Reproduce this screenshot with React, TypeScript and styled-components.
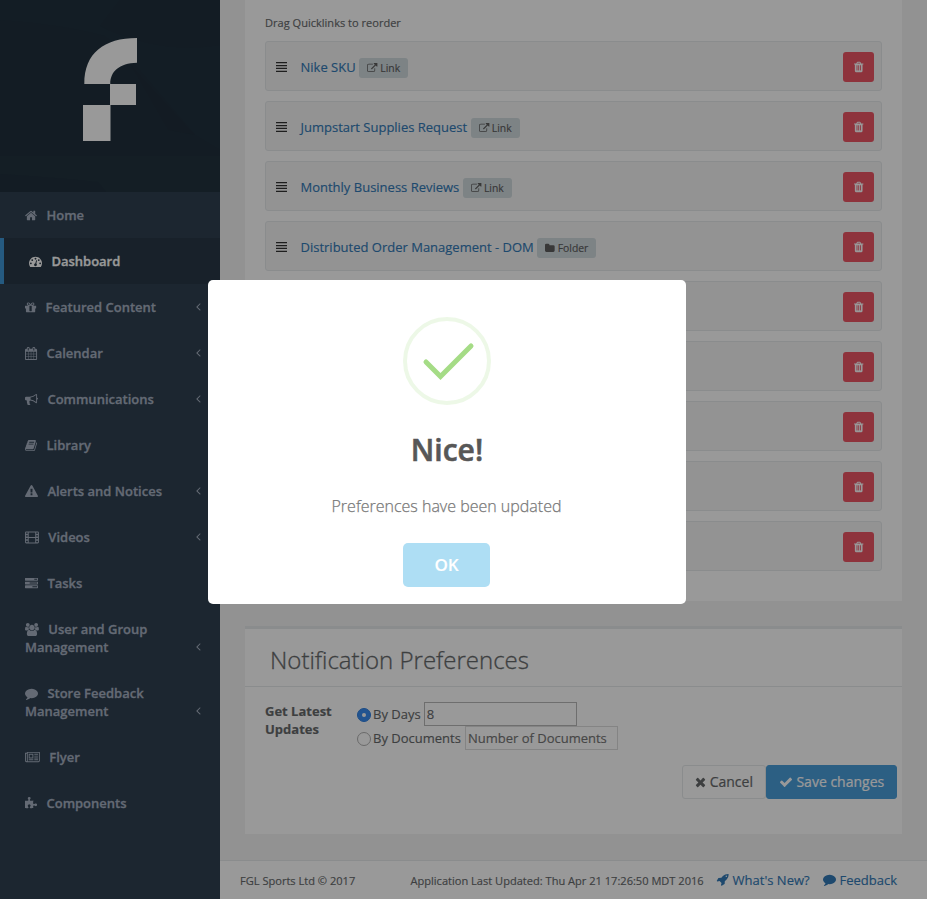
import React from "react";
import styled, { createGlobalStyle } from "styled-components";

const GlobalStyle = createGlobalStyle`
  * { box-sizing: border-box; }
  html, body { margin: 0; padding: 0; }
  body {
    font-family: "Open Sans", "Noto Sans", sans-serif;
    font-size: 13px;
    line-height: 18px;
    color: #676a6c;
    background: #f3f3f4;
    overflow: hidden;
    -webkit-text-stroke: 0.15px currentColor;
  }
`;

/* ---------- icons: [left edge, advance width, path] on a 1792-unit em ---------- */

type Glyph = [number, number, string];

const filmHoles = [128, 1536]
  .flatMap((x) => [256, 640, 1024, 1408].map((y) => `M${x} ${y - 64}h256v192h-256z`))
  .join("");

const glyphs: Record<string, Glyph> = {
  home: [64, 1664, "M1472 992v480q0 26-19 45t-45 19h-384v-384h-256v384h-384q-26 0-45-19t-19-45v-480q0-1 .5-3t.5-3l575-474 575 474q1 2 1 6zm223-69l-62 74q-8 9-21 11h-3q-13 0-21-7l-692-577-692 577q-12 8-24 7-13-2-21-11l-62-74q-8-10-7-23.500t11-21.500l719-599q32-26 76-26t76 26l244 204v-195q0-14 9-23t23-9h192q14 0 23 9t9 23v408l219 182q10 8 11 21.500t-7 23.500z"],
  dashboard: [0, 1792, "M384 1152q0-53-37.500-90.500t-90.500-37.500-90.500 37.500-37.500 90.500 37.500 90.500 90.500 37.500 90.500-37.500 37.500-90.500zm192-448q0-53-37.500-90.500t-90.500-37.500-90.500 37.500-37.500 90.500 37.500 90.500 90.500 37.500 90.500-37.500 37.500-90.500zm428 481l101-382q6-26-7.500-48.500t-38.500-29.500-48 6.500-30 39.500l-101 382q-60 5-107 43.500t-63 98.500q-20 77 20 146t117 89 146-20 89-117q16-60-6-117t-72-91zm660-33q0-53-37.500-90.500t-90.500-37.500-90.500 37.500-37.500 90.500 37.500 90.500 90.500 37.500 90.500-37.500 37.500-90.500zm-640-640q0-53-37.500-90.500t-90.500-37.500-90.500 37.500-37.500 90.500 37.500 90.500 90.500 37.500 90.500-37.500 37.500-90.500zm448 192q0-53-37.500-90.500t-90.500-37.500-90.500 37.500-37.500 90.500 37.500 90.500 90.500 37.500 90.500-37.500 37.500-90.500zm320 448q0 261-141 483-19 29-54 29h-1402q-35 0-54-29-141-221-141-483 0-182 71-348t191-286 286-191 348-71 348 71 286 191 191 286 71 348z"],
  gift: [128, 1536, "M1056 1356v-716h-320v716q0 25 18 38.500t46 13.500h192q28 0 46-13.500t18-38.500zm-456-844h195l-126-161q-26-31-69-31-40 0-68 28t-28 68 28 68 68 28zm688-96q0-40-28-68t-68-28q-43 0-69 31l-125 161h194q40 0 68-28t28-68zm376 256v320q0 14-9 23t-23 9h-96v416q0 40-28 68t-68 28h-1088q-40 0-68-28t-28-68v-416h-96q-14 0-23-9t-9-23v-320q0-14 9-23t23-9h440q-93 0-158.500-65.500t-65.500-158.500 65.500-158.500 158.500-65.500q107 0 168 77l128 165 128-165q61-77 168-77 93 0 158.500 65.500t65.500 158.500-65.500 158.500-158.500 65.500h440q14 0 23 9t9 23z"],
  calendar: [64, 1664, "M192 1664h288v-288h-288v288zm352 0h320v-288h-320v288zm-352-352h288v-320h-288v320zm352 0h320v-320h-320v320zm-352-384h288v-288h-288v288zm736 736h320v-288h-320v288zm-384-736h320v-288h-320v288zm768 736h288v-288h-288v288zm-384-352h320v-320h-320v320zm-352-864v-288q0-13-9.500-22.500t-22.500-9.500h-64q-13 0-22.500 9.500t-9.500 22.500v288q0 13 9.500 22.500t22.500 9.500h64q13 0 22.500-9.500t9.500-22.500zm736 864h288v-320h-288v320zm-384-384h320v-288h-320v288zm384 0h288v-288h-288v288zm32-480v-288q0-13-9.500-22.500t-22.500-9.500h-64q-13 0-22.500 9.500t-9.500 22.500v288q0 13 9.500 22.500t22.500 9.500h64q13 0 22.500-9.500t9.500-22.500zm384-64v1280q0 52-38 90t-90 38h-1408q-52 0-90-38t-38-90v-1280q0-52 38-90t90-38h128v-96q0-66 47-113t113-47h64q66 0 113 47t47 113v96h384v-96q0-66 47-113t113-47h64q66 0 113 47t47 113v96h128q52 0 90 38t38 90z"],
  bullhorn: [0, 1792, "M1664 640q53 0 90.500 37.500t37.500 90.500-37.500 90.500-90.500 37.500v384q0 52-38 90t-90 38q-417-347-812-380-58 19-91 66t-31 100.500 40 92.500q-20 33-23 65.500t6 58 33.500 55 48 50 61.500 50.500q-29 58-111.500 83t-168.500 11.500-132-55.500q-7-23-29.500-87.500t-32-94.500-23-89-15-101 3.500-98.500 22-110.500h-122q-66 0-113-47t-47-113v-192q0-66 47-113t113-47h480q435 0 896-384 52 0 90 38t38 90v384zm-128 604v-954q-394 302-768 343v270q377 42 768 341z"],
  book: [64, 1664, "M1703 478q40 57 18 129l-275 906q-19 64-76.500 107.500t-122.500 43.500h-923q-77 0-148.500-53.500t-99.500-131.500q-24-67-2-127 0-4 3-27t4-37q1-8-3-21.500t-3-19.500q2-11 8-21t16.500-23.500 16.500-23.500q23-38 45-91.500t30-91.500q3-10 .5-30t-.5-28q3-11 17-28t17-23q21-36 42-92t25-90q1-9-2.500-32t.5-28q4-13 22-30.500t22-22.500q19-26 42.500-84.500t27.500-96.500q1-8-3-25.500t-2-26.500q2-8 9-18t18-23 17-21q8-12 16.500-30.500t15-35 16-36 19.500-32 26.500-23.500 36-11.500 47.500 5.500l-1 3q38-9 51-9h761q74 0 114 56t18 130l-274 906q-36 119-71.500 153.500t-128.500 34.500h-869q-27 0-38 15-11 16-1 43 24 70 144 70h923q29 0 56-15.500t35-41.500l300-987q7-22 5-57 38 15 59 43zm-1064 2q-4 13 2 22.500t20 9.500h608q13 0 25.500-9.500t16.500-22.500l21-64q4-13-2-22.500t-20-9.500h-608q-13 0-25.500 9.500t-16.500 22.500zm-83 256q-4 13 2 22.500t20 9.500h608q13 0 25.500-9.500t16.500-22.500l21-64q4-13-2-22.500t-20-9.500h-608q-13 0-25.500 9.500t-16.500 22.500z"],
  warning: [0, 1792, "M1024 1375v-190q0-14-9.500-23.500t-22.500-9.500h-192q-13 0-22.500 9.500t-9.500 23.500v190q0 14 9.500 23.500t22.500 9.500h192q13 0 22.500-9.500t9.500-23.500zm-2-374l18-459q0-12-10-19-13-11-24-11h-220q-11 0-24 11-10 7-10 21l17 457q0 10 10 16.500t24 6.500h185q14 0 23.500-6.500t10.500-16.500zm-14-934l768 1408q35 63-2 126-17 29-46.500 46t-63.500 17h-1536q-34 0-63.500-17t-46.500-46q-37-63-2-126l768-1408q17-31 47-49t65-18 65 18 47 49z"],
  film: [0, 1920, `M160 64h1600q160 0 160 160v1344q0 160-160 160h-1600q-160 0-160-160v-1344q0-160 160-160z${filmHoles}M512 192h896v640h-896zM512 960h896v640h-896z`],
  tasks: [0, 1792, "M1024 1408h640v-128h-640v128zm-384-512h1024v-128h-1024v128zm640-512h384v-128h-384v128zm512 832v256q0 26-19 45t-45 19h-1664q-26 0-45-19t-19-45v-256q0-26 19-45t45-19h1664q26 0 45 19t19 45zm0-512v256q0 26-19 45t-45 19h-1664q-26 0-45-19t-19-45v-256q0-26 19-45t45-19h1664q26 0 45 19t19 45zm0-512v256q0 26-19 45t-45 19h-1664q-26 0-45-19t-19-45v-256q0-26 19-45t45-19h1664q26 0 45 19t19 45z"],
  users: [-64, 1920, "M529 896q-162 5-265 128h-134q-82 0-138-40.500t-56-118.500q0-353 124-353 6 0 43.500 21t97.500 42.500 119 21.500q67 0 133-23-5 37-5 66 0 139 81 256zm1071 637q0 120-73 189.500t-194 69.500h-874q-121 0-194-69.500t-73-189.500q0-53 3.500-103.500t14-109 26.500-108.500 43-97.500 62-81 85.500-53.500 111.500-20q10 0 43 21.500t73 48 107 48 135 21.500 135-21.500 107-48 73-48 43-21.500q61 0 111.500 20t85.500 53.500 62 81 43 97.500 26.500 108.500 14 109 3.500 103.500zm-1024-1277q0 106-75 181t-181 75-181-75-75-181 75-181 181-75 181 75 75 181zm704 384q0 159-112.500 271.500t-271.500 112.500-271.500-112.500-112.500-271.500 112.500-271.500 271.500-112.500 271.500 112.500 112.500 271.500zm576 225q0 78-56 118.500t-138 40.500h-134q-103-123-265-128 81-117 81-256 0-29-5-66 66 23 133 23 59 0 119-21.500t97.500-42.500 43.500-21q124 0 124 353zm-128-609q0 106-75 181t-181 75-181-75-75-181 75-181 181-75 181 75 75 181z"],
  comment: [0, 1792, "M1792 896q0 174-120 321.500t-326 233-450 85.500q-70 0-145-8-198 175-460 242-49 14-114 22-17 2-30.500-9t-17.500-29v-1q-3-4-.5-12t2-10 4.500-9.500l6-9 7-8.500 8-9q7-8 31-34.500t34.500-38 31-39.500 32.500-51 27-59 26-76q-157-89-247.500-220t-90.500-281q0-130 71-248.500t191-204.500 286-136.500 348-50.500q244 0 450 85.500t326 233 120 321.500z"],
  newspaper: [0, 2048, "M1024 512h-384v384h384v-384zm128 640v128h-640v-128h640zm0-768v640h-640v-640h640zm640 768v128h-512v-128h512zm0-256v128h-512v-128h512zm0-256v128h-512v-128h512zm0-256v128h-512v-128h512zm-1536 960v-960h-128v960q0 26 19 45t45 19 45-19 19-45zm1664 0v-1088h-1536v1088q0 33-11 64h1483q26 0 45-19t19-45zm128-1216v1216q0 80-56 136t-136 56h-1664q-80 0-136-56t-56-136v-1088h256v-128h1792z"],
  puzzle: [91, 1664, "M1755 1083q0 81-44.500 135t-123.500 54q-41 0-77.500-17.500t-59-38-56.500-38-71-17.500q-110 0-110 124 0 39 16 115t15 115v5q-22 0-33 1-34 3-97.500 11.500t-115.500 13.500-98 5q-61 0-103-26.500t-42-83.500q0-37 17.500-71t38-56.500 38-59 17.500-77.500q0-79-54-123.500t-135-44.500q-84 0-143 45.500t-59 127.500q0 43 15 83t33.500 64.500 33.500 53 15 50.500q0 45-46 89-37 35-117 35-95 0-245-24-9-2-27.500-4t-27.500-4l-13-2q-1 0-3-1-2 0-2-1v-1024q2 1 17.500 3.500t34 5 21.500 3.500q150 24 245 24 80 0 117-35 46-44 46-89 0-22-15-50.500t-33.500-53-33.500-64.500-15-83q0-82 59-127.500t144-45.500q80 0 134 44.500t54 123.500q0 41-17.500 77.500t-38 59-38 56.500-17.500 71q0 57 42 83.500t103 26.500q64 0 180-15t163-17v2q-1 2-3.500 17.500t-5 34-3.500 21.500q-24 150-24 245 0 80 35 117 44 46 89 46 22 0 50.500-15t53-33.500 64.500-33.500 83-15q82 0 127.500 59t45.500 143z"],
  angleLeft: [576, 640, "M1203 544q0 13-10 23l-393 393 393 393q10 10 10 23t-10 23l-50 50q-10 10-23 10t-23-10l-466-466q-10-10-10-23t10-23l466-466q10-10 23-10t23 10l50 50q10 10 10 23z"],
  trash: [192, 1408, "M704 1376v-704q0-14-9-23t-23-9h-64q-14 0-23 9t-9 23v704q0 14 9 23t23 9h64q14 0 23-9t9-23zm256 0v-704q0-14-9-23t-23-9h-64q-14 0-23 9t-9 23v704q0 14 9 23t23 9h64q14 0 23-9t9-23zm256 0v-704q0-14-9-23t-23-9h-64q-14 0-23 9t-9 23v704q0 14 9 23t23 9h64q14 0 23-9t9-23zm-544-992h448l-48-117q-7-9-17-11h-317q-10 2-17 11zm928 32v64q0 14-9 23t-23 9h-96v948q0 83-47 143.500t-113 60.500h-832q-66 0-113-58.500t-47-141.500v-952h-96q-14 0-23-9t-9-23v-64q0-14 9-23t23-9h309l70-167q15-37 54-63t79-26h320q40 0 79 26t54 63l70 167h309q14 0 23 9t9 23z"],
  external: [0, 1792, "M1408 928v320q0 119-84.500 203.500t-203.500 84.500h-832q-119 0-203.500-84.500t-84.500-203.500v-832q0-119 84.500-203.500t203.500-84.500h704q14 0 23 9t9 23v64q0 14-9 23t-23 9h-704q-66 0-113 47t-47 113v832q0 66 47 113t113 47h832q66 0 113-47t47-113v-320q0-14 9-23t23-9h64q14 0 23 9t9 23zm384-864v512q0 26-19 45t-45 19-45-19l-176-176-652 652q-10 10-23 10t-23-10l-114-114q-10-10-10-23t10-23l652-652-176-176q-19-19-19-45t19-45 45-19h512q26 0 45 19t19 45z"],
  folder: [64, 1664, "M1728 608v704q0 92-66 158t-158 66h-1216q-92 0-158-66t-66-158v-960q0-92 66-158t158-66h320q92 0 158 66t66 158v32h672q92 0 158 66t66 158z"],
  check: [0, 1792, "M1671 566q0 40-28 68l-724 724-136 136q-28 28-68 28t-68-28l-136-136-362-362q-28-28-28-68t28-68l136-136q28-28 68-28t68 28l294 295 656-657q28-28 68-28t68 28l136 136q28 28 28 68z"],
  times: [192, 1408, "M1490 1322q0 40-28 68l-136 136q-28 28-68 28t-68-28l-294-294-294 294q-28 28-68 28t-68-28l-136-136q-28-28-28-68t28-68l294-294-294-294q-28-28-28-68t28-68l136-136q28-28 68-28t68 28l294 294 294-294q28-28 68-28t68 28l136 136q28 28 28 68t-28 68l-294 294 294 294q28 28 28 68z"],
  rocket: [64, 1664, "M1440 448q0-40-28-68t-68-28-68 28-28 68 28 68 68 28 68-28 28-68zm224-288q0 249-75.500 430.500t-253.500 360.500q-81 80-195 176l-20 379q-2 16-16 26l-384 224q-7 4-16 4-12 0-23-9l-64-64q-13-14-8-32l85-276-281-281-276 85q-3 1-9 1-14 0-23-9l-64-64q-17-19-5-39l224-384q10-14 26-16l379-20q96-114 176-195 188-187 358-258t431-71q14 0 24 9.500t10 22.500z"],
};

const Svg = styled.svg<{ $ratio: number }>`
  width: ${(p) => p.$ratio}em;
  height: 1em;
  vertical-align: -0.143em;
  fill: currentColor;
  flex: none;
  overflow: visible;
`;

function Icon({ name, className }: { name: string; className?: string }) {
  const [x, w, d] = glyphs[name];
  return (
    <Svg className={className} $ratio={w / 1792} viewBox={`${x} 0 ${w} 1792`} aria-hidden>
      <path d={d} fillRule={name === "film" ? "evenodd" : "nonzero"} />
    </Svg>
  );
}

/* ---------- layout ---------- */

const Page = styled.div`
  display: flex;
  width: 927px;
  height: 899px;
`;

const Sidebar = styled.nav`
  width: 220px;
  flex: none;
  background: #2f4050;
`;

const Brand = styled.div`
  height: 192px;
  background: #21313e;
`;

const NavItem = styled.a<{ $active?: boolean }>`
  display: flex;
  align-items: flex-end;
  justify-content: space-between;
  padding: 14px 19.500px 14px 25px;
  border-left: ${(p) => (p.$active ? "4px solid #3f97d5" : "0")};
  background: ${(p) => (p.$active ? "#293846" : "transparent")};
  color: ${(p) => (p.$active ? "#fff" : "#a7b1c2")};
  font-weight: 600;
  line-height: 18px;
  -webkit-text-stroke-width: 0.3px;
`;

const NavLabel = styled.span`
  width: 150px;
`;

const NavIcon = styled(Icon)`
  margin-right: 6px;
`;

const Arrow = styled(Icon)`
  margin-bottom: 3px;
`;

const Main = styled.main`
  flex: 1;
  display: flex;
  flex-direction: column;
  min-width: 0;
`;

const Content = styled.div`
  flex: 1;
  padding: 0 25px;
`;

const QuickPanel = styled.section`
  height: 601px;
  padding: 14px 20px 0;
  background: #fff;
`;

const Hint = styled.div`
  height: 27px;
  font-size: 11.05px;
`;

const QuickList = styled.div`
  display: flex;
  flex-direction: column;
  gap: 10px;
`;

const QuickItem = styled.div`
  display: flex;
  align-items: center;
  height: 50px;
  padding: 2px 7px 0 10px;
  border: 1px solid #e7eaec;
  border-radius: 3px;
  background: #f5f5f5;
`;

const Handle = styled.svg`
  width: 11px;
  height: 10px;
  margin-right: 13.500px;
  fill: #333;
`;

const QuickName = styled.a`
  color: #337ab7;
  font-size: 13px;
  white-space: nowrap;
`;

const Badge = styled.span`
  height: 20px;
  margin: 2px 0 0 3.500px;
  padding: 0 8px;
  border-radius: 3px;
  background: #d1dade;
  color: #5e5e5e;
  font-size: 10.4px;
  line-height: 20px;
  white-space: nowrap;
`;

const DeleteButton = styled.button`
  display: flex;
  align-items: center;
  justify-content: center;
  width: 31px;
  height: 30px;
  margin-left: auto;
  padding: 0;
  border: 0;
  border-radius: 3px;
  background: #ed5565;
  color: #fff;
  font-size: 12px;
`;

const PrefPanel = styled.section`
  height: 208px;
  margin-top: 25px;
  background: #fff;
  border-top: 3px solid #e7eaec;
`;

const PrefTitle = styled.h2`
  height: 58px;
  margin: 0;
  padding: 0 25px;
  border-bottom: 1px solid #e7eaec;
  font-size: 24px;
  font-weight: 300;
  line-height: 62px;
  -webkit-text-stroke-width: 0.3px;
`;

const PrefBody = styled.div`
  display: flex;
  padding: 15px 20px 0;
`;

const PrefLabel = styled.label`
  width: 92px;
  font-weight: 700;
`;

const Option = styled.label`
  display: flex;
  align-items: center;
  height: 24px;
  white-space: nowrap;
`;

const Radio = styled.span<{ $on?: boolean }>`
  display: flex;
  align-items: center;
  justify-content: center;
  width: 14px;
  height: 14px;
  margin: 2px 2px 0 0;
  border-radius: 50%;
  border: 1px solid ${(p) => (p.$on ? "#2f7fe0" : "#b0b0b0")};
  background: ${(p) => (p.$on ? "#3a8df0" : "#fff")};
  &::after {
    content: "";
    width: 4px;
    height: 4px;
    border-radius: 50%;
    background: #fff;
  }
`;

const Field = styled.input<{ $strong?: boolean }>`
  width: 153px;
  height: 24px;
  margin-left: ${(p) => (p.$strong ? 3 : 4)}px;
  padding: 0 2px;
  border: 1px solid ${(p) => (p.$strong ? "#b8b8b8" : "#dcdcdc")};
  background: transparent;
  color: #676a6c;
  font: 13px "Open Sans", sans-serif;
  outline: 0;
  &::placeholder { color: #757575; opacity: 1; }
`;

const Actions = styled.div`
  display: flex;
  justify-content: flex-end;
  padding: 15px 5px 0;
`;

const ActionButton = styled.button<{ $primary?: boolean }>`
  width: ${(p) => (p.$primary ? 131 : 84)}px;
  height: 34px;
  padding: 0 0 2px 0;
  border: 1px solid ${(p) => (p.$primary ? "#4a9eda" : "#e7eaec")};
  border-radius: 3px;
  background: ${(p) => (p.$primary ? "#4a9eda" : "#fff")};
  color: ${(p) => (p.$primary ? "#fff" : "#676a6c")};
  font: 14px "Open Sans", sans-serif;
  white-space: nowrap;
  -webkit-text-stroke-width: 0.2px;
`;

const Footer = styled.footer`
  display: flex;
  align-items: center;
  height: 39px;
  padding: 0 30px 0 20px;
  border-top: 1px solid #e7eaec;
  background: #fff;
  font-size: 11.07px;
  white-space: nowrap;
`;

const Copyright = styled.span`
  padding-top: 1px;
`;

const Updated = styled.span`
  margin-left: auto;
  padding-top: 1px;
`;

const FooterLink = styled.a`
  margin-left: 13.500px;
  padding-bottom: 1px;
  color: #337ab7;
  font-size: 13px;
`;

/* ---------- dialog ---------- */

const Overlay = styled.div`
  position: fixed;
  inset: 0;
  background: rgba(0, 0, 0, 0.4);
`;

const Dialog = styled.div`
  position: fixed;
  left: 208px;
  top: 280px;
  display: flex;
  flex-direction: column;
  align-items: center;
  width: 478px;
  height: 324px;
  padding-top: 37px;
  border-radius: 5px;
  background: #fff;
`;

const DialogTitle = styled.h2`
  margin: 25px 0 0;
  color: #575757;
  font-size: 30px;
  font-weight: 600;
  line-height: 40px;
  -webkit-text-stroke-width: 0.6px;
`;

const DialogText = styled.p`
  margin: 25px 1px 0 0;
  color: #797979;
  font-size: 16px;
  font-weight: 300;
  line-height: 22px;
  -webkit-text-stroke-width: 0.25px;
`;

const OkButton = styled.button`
  width: 87px;
  height: 44px;
  margin: 26px 1px 0 0;
  padding: 0 0 2px;
  border: 0;
  border-radius: 5px;
  background: #aedef4;
  color: #fff;
  font: 600 17px "Open Sans", sans-serif;
`;

/* ---------- data ---------- */

const nav: { icon: string; label: string; more?: boolean; active?: boolean }[] = [
  { icon: "home", label: "Home" },
  { icon: "dashboard", label: "Dashboard", active: true },
  { icon: "gift", label: "Featured Content", more: true },
  { icon: "calendar", label: "Calendar", more: true },
  { icon: "bullhorn", label: "Communications", more: true },
  { icon: "book", label: "Library" },
  { icon: "warning", label: "Alerts and Notices", more: true },
  { icon: "film", label: "Videos", more: true },
  { icon: "tasks", label: "Tasks" },
  { icon: "users", label: "User and Group Management", more: true },
  { icon: "comment", label: "Store Feedback Management", more: true },
  { icon: "newspaper", label: "Flyer" },
  { icon: "puzzle", label: "Components" },
];

const quicklinks: { name?: string; kind?: string }[] = [
  { name: "Nike SKU", kind: "Link" },
  { name: "Jumpstart Supplies Request", kind: "Link" },
  { name: "Monthly Business Reviews", kind: "Link" },
  { name: "Distributed Order Management - DOM", kind: "Folder" },
  {}, {}, {}, {}, {},
];

export default function App() {
  return (
    <>
      <GlobalStyle />
      <Page>
        <Sidebar>
          <Brand>
            <svg width="220" height="192" viewBox="0 0 220 192">
              <path d="M100 26L120 0H220V45Q160 55 100 26ZM0 20Q60 24 105 36L135 65L195 135L220 150V192H0Z" fill="#20303d" />
              <path d="M130 64L195 135L168 130Z" fill="#202e3b" />
              <path d="M0 156H220V192H0Z" fill="#22323e" />
              <path d="M0 174Q60 178 98 182L106 192H0Z" fill="#20303d" />
              <path fill="#fff" d="M84.300 84C84.300 53 104 38 137 38V62.700C119 63 110 72 110.300 84H136V105H110.500V141H83V105H110V84Z" />
            </svg>
          </Brand>
          {nav.map((n) => (
            <NavItem key={n.label} $active={n.active}>
              <NavLabel>
                <NavIcon name={n.icon} /> {n.label}
              </NavLabel>
              {n.more && <Arrow name="angleLeft" />}
            </NavItem>
          ))}
        </Sidebar>
        <Main>
          <Content>
            <QuickPanel>
              <Hint>Drag Quicklinks to reorder</Hint>
              <QuickList>
                {quicklinks.map((q, i) => (
                  <QuickItem key={i}>
                    {q.name && (
                      <>
                        <Handle viewBox="0 0 11 10">
                          <path d="M0 0h11v1.300H0zM0 2.900h11v1.300H0zM0 5.800h11v1.300H0zM0 8.700h11v1.300H0z" />
                        </Handle>
                        <QuickName>{q.name}</QuickName>
                        <Badge>
                          <Icon name={q.kind === "Link" ? "external" : "folder"} /> {q.kind}
                        </Badge>
                      </>
                    )}
                    <DeleteButton aria-label="Delete">
                      <Icon name="trash" />
                    </DeleteButton>
                  </QuickItem>
                ))}
              </QuickList>
            </QuickPanel>
            <PrefPanel>
              <PrefTitle>Notification Preferences</PrefTitle>
              <PrefBody>
                <PrefLabel>Get Latest Updates</PrefLabel>
                <div>
                  <Option>
                    <Radio $on />
                    By Days
                    <Field $strong defaultValue="8" />
                  </Option>
                  <Option>
                    <Radio />
                    By Documents
                    <Field placeholder="Number of Documents" />
                  </Option>
                </div>
              </PrefBody>
              <Actions>
                <ActionButton>
                  <Icon name="times" /> Cancel
                </ActionButton>
                <ActionButton $primary>
                  <Icon name="check" /> Save changes
                </ActionButton>
              </Actions>
            </PrefPanel>
          </Content>
          <Footer>
            <Copyright>FGL Sports Ltd © 2017</Copyright>
            <Updated>Application Last Updated: Thu Apr 21 17:26:50 MDT 2016</Updated>
            <FooterLink>
              <Icon name="rocket" /> What's New?
            </FooterLink>
            <FooterLink>
              <Icon name="comment" /> Feedback
            </FooterLink>
          </Footer>
        </Main>
      </Page>
      <Overlay />
      <Dialog role="dialog">
        <svg width="88" height="88" viewBox="0 0 88 88" fill="none">
          <circle cx="44" cy="44" r="42" stroke="#a5dc86" strokeOpacity=".2" strokeWidth="4" />
          <path d="M23 45L37.500 59.500L68 29" stroke="#a5dc86" strokeWidth="5" strokeLinecap="round" />
        </svg>
        <DialogTitle>Nice!</DialogTitle>
        <DialogText>Preferences have been updated</DialogText>
        <OkButton>OK</OkButton>
      </Dialog>
    </>
  );
}
